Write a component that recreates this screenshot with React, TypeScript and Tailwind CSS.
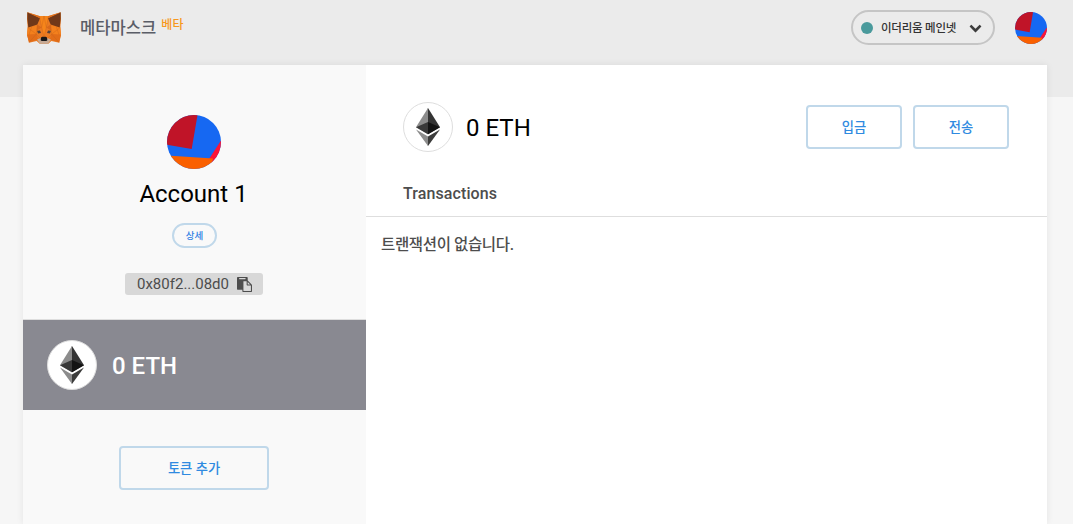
import React from 'react';

function Fox() {
  return (
    <svg viewBox="36 36 102 97" className="h-8 w-[34px]" preserveAspectRatio="none" aria-hidden="true">
      <path d="M37 37 73 48h28l36-11 1 20-2 26 2 21-5 25-24-5-9 8H74l-9-8-23 5-6-25 2-21-2-26z" fill="#ea7a22" />
      <path d="M73 48h28l-7 35-7 28-7-28z" fill="#f6851b" />
      <path d="m38 83 30-6 6 20-10 6-28 2zM136 83l-30-6-6 20 10 6 28 2z" fill="#f3801d" />
      <path d="m36 105 28-2 6 16-28 9zM138 105l-28-2-6 16 28 9z" fill="#e26d18" />
      <path d="m37 37 38 18-8 19-27 9-3-26zM137 37 99 55l8 19 27 9 3-26z" fill="#703819" />
      <path d="m37 37 36 11 4 8zM137 37l-36 11-4 8z" fill="#df701d" />
      <path d="m67 74 13 9-15 10zM107 74l-13 9 15 10z" fill="#d9681a" />
      <path d="m66 93 9-1 3 8-9 1zM108 93l-9-1-3 8 9 1z" fill="#55413a" />
      <path d="m66 119 11-4h20l11 4-9 13H75z" fill="#c5aa96" />
      <path d="m78 113 4-2h10l4 2 1 9-3 2H80l-3-2z" fill="#181819" />
      <path d="m73 48 7 35 7-35M101 48l-7 35-7-35M80 83l7 28 7-28M38 83l26 20M136 83l-26 20M64 103l-22 25M110 103l22 25M67 74l-3 29 13 14M107 74l3 29-13 14M50 81l-8 24M124 81l8 24" fill="none" stroke="#c25c1a" strokeWidth="1" />
    </svg>
  );
}

function Identicon({ className }: { className: string }) {
  return (
    <svg viewBox="0 0 54 54" className={'rounded-full ' + className} aria-hidden="true">
      <rect width="54" height="54" fill="#1668f2" />
      <path d="M0 0h30.500L24.700 34 0 29.700z" fill="#c01428" />
      <path d="M55 24 42 44l5 8 9-8z" fill="#fc1437" />
      <path d="m0 40.500 46 3-3 12H0z" fill="#fa6000" />
    </svg>
  );
}

function EthLogo() {
  return (
    <span className="flex size-[50px] shrink-0 items-center justify-center rounded-full border border-[#dedede] bg-white">
      <svg viewBox="0 0 256 417" className="h-[38px] w-6" preserveAspectRatio="none" aria-hidden="true">
        <path fill="#343434" d="m128 0-3 9.500v275.700l3 2.700 128-75.600z" />
        <path fill="#8c8c8c" d="M128 0 0 212.300l128 75.600V0z" />
        <path fill="#3c3c3b" d="m128 312.200-2 1.900v98.200l2 4.600 128-180.300z" />
        <path fill="#8c8c8c" d="M128 416.900V312.200L0 236.600z" />
        <path fill="#141414" d="m128 287.900 128-75.600-128-58.200z" />
        <path fill="#393939" d="m0 212.300 128 75.600V154.100z" />
      </svg>
    </span>
  );
}

function Chevron() {
  return (
    <svg viewBox="0 0 1792 1792" className="size-[13px]" fill="#3c3c3c" aria-hidden="true">
      <path d="M1683 808l-742 741q-19 19-45 19t-45-19l-742-741q-19-19-19-45.500t19-45.500l166-165q19-19 45-19t45 19l531 531 531-531q19-19 45-19t45 19l166 165q19 19 19 45.500t-19 45.500z" />
    </svg>
  );
}

function Clipboard() {
  return (
    <svg viewBox="0 0 1792 1792" className="size-[15px]" fill="#4d4d4d" aria-hidden="true">
      <path d="M768 1664h896v-640h-416q-40 0-68-28t-28-68v-416h-384v1152zm256-1440v-64q0-13-9.500-22.500t-22.500-9.500h-704q-13 0-22.500 9.500t-9.500 22.500v64q0 13 9.500 22.500t22.500 9.500h704q13 0 22.500-9.500t9.500-22.500zm256 672h299l-299-299v299zm512 128v672q0 40-28 68t-68 28h-960q-40 0-68-28t-28-68v-160h-544q-40 0-68-28t-28-68v-1344q0-40 28-68t68-28h1088q40 0 68 28t28 68v328q21 13 36 28l408 408q28 28 48 76t20 88z" />
    </svg>
  );
}

function OutlineButton({ children, className }: { children: React.ReactNode; className: string }) {
  return (
    <button className={'flex h-11 items-center justify-center rounded-[4px] border-2 border-[#c0d8ea] pt-0.5 text-[13.300px] leading-5 font-medium text-[#2f8ae0] ' + className}>
      {children}
    </button>
  );
}

export default function App() {
  return (
    <div className="h-[524px] w-[1073px] overflow-hidden bg-[#f6f6f6] font-['Roboto','Noto_Sans_CJK_KR',sans-serif]">
      <header className="h-[97px] bg-[#ebebeb]">
        <div className="flex h-[65px] items-start pr-[26px] pl-[27px] pt-3">
          <Fox />
          <h1 className="mt-[5px] ml-[19px] text-[16.600px] leading-6 font-medium text-[#5a5d67]">메타마스크</h1>
          <span className="mt-1 ml-[5px] text-[12px] leading-[18px] font-medium text-[#f7981c]">베타</span>
          <button className="-mt-0.5 ml-auto flex h-[35px] w-[144px] items-center rounded-full border-2 border-[#c5c5c5] pl-2">
            <span className="size-3 rounded-full bg-[#4a9a9c]" />
            <span className="ml-2 text-[11.500px] leading-4 font-medium tracking-[-0.230px] whitespace-nowrap text-[#333]">이더리움 메인넷</span>
            <span className="mr-[11px] ml-auto"><Chevron /></span>
          </button>
          <Identicon className="ml-5 size-8" />
        </div>
      </header>
      <main className="-mt-8 ml-[23px] flex h-[459px] w-[1024px] bg-white shadow-[0_0_7px_rgba(0,0,0,0.08)]">
        <aside className="flex w-[343px] shrink-0 flex-col items-center bg-[#f9f9f9] pt-[50px]">
          <Identicon className="mr-px size-[54px]" />
          <h2 className="mt-[9px] mr-0.5 text-[24px] leading-8 text-black">Account 1</h2>
          <button className="mt-[13px] flex h-[25px] w-[45px] items-center justify-center rounded-full border-2 border-[#c0d8ea] text-[9.500px] leading-4 font-medium text-[#2f80e4]">상세</button>
          <div className="mt-[25px] mr-px flex h-[22px] w-[138px] items-center rounded-[3px] bg-[#d8d8d8] pl-3 text-[15px] leading-[22px] text-[#4d4d4d]">
            <span className="w-[100px]">0x80f2...08d0</span>
            <Clipboard />
          </div>
          <div className="mt-6 flex h-[91px] w-full items-center border-t border-[#dedede] bg-[#898991] pl-6">
            <EthLogo />
            <span className="mt-0.5 ml-[15px] text-[24px] leading-8 font-medium text-white">0 ETH</span>
          </div>
          <OutlineButton className="mt-9 mr-px w-[150px]">토큰 추가</OutlineButton>
        </aside>
        <section className="min-w-0 flex-1">
          <div className="flex items-start pt-[37px] pr-[38px] pl-[37px]">
            <EthLogo />
            <span className="mt-2.5 ml-[13px] text-[24px] leading-8 text-black">0 ETH</span>
            <div className="mt-[3px] ml-auto flex gap-[11px]">
              <OutlineButton className="w-24">입금</OutlineButton>
              <OutlineButton className="w-24">전송</OutlineButton>
            </div>
          </div>
          <div className="mt-[29px] h-[36px] border-b border-[#dedede] pt-px pl-[37px] text-[16px] leading-6 font-medium tracking-[0.100px] text-[#4d4d4d]">Transactions</div>
          <p className="mt-4 pl-[15px] text-[15.500px] leading-6 font-medium tracking-[-0.350px] text-[#4d4d4d]">트랜잭션이 없습니다.</p>
        </section>
      </main>
    </div>
  );
}
